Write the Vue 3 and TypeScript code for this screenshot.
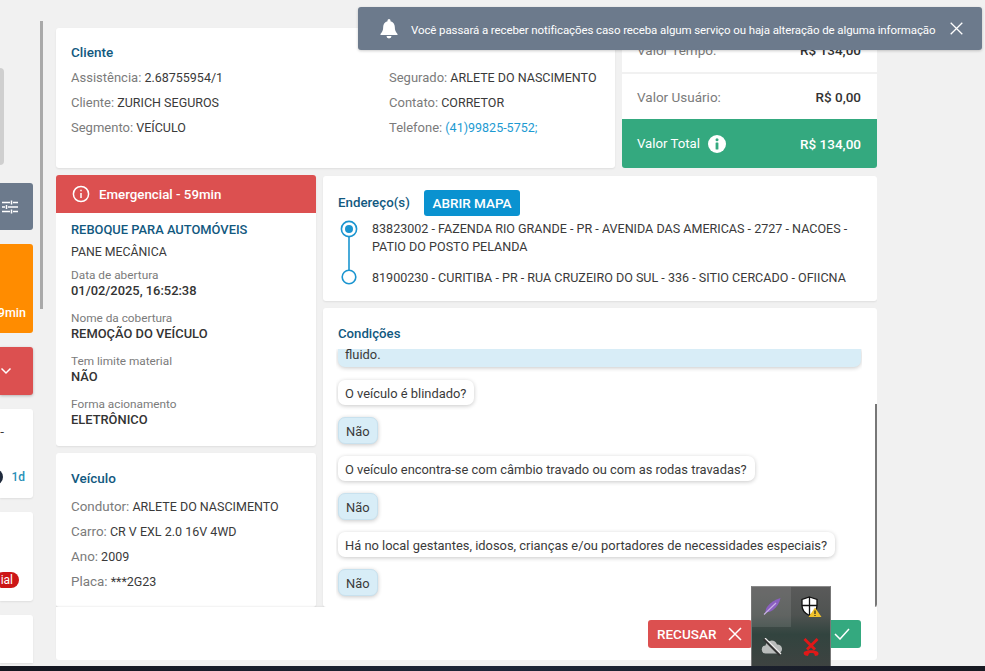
<script setup lang="ts">
interface Row { label: string; value: string; link?: boolean }
const clienteLeft: Row[] = [
  { label: 'Assistência:', value: '2.68755954/1' },
  { label: 'Cliente:', value: 'ZURICH SEGUROS' },
  { label: 'Segmento:', value: 'VEÍCULO' },
]
const clienteRight: Row[] = [
  { label: 'Segurado:', value: 'ARLETE DO NASCIMENTO' },
  { label: 'Contato:', value: 'CORRETOR' },
  { label: 'Telefone:', value: '(41)99825-5752;', link: true },
]
const veiculo: Row[] = [
  { label: 'Condutor:', value: 'ARLETE DO NASCIMENTO' },
  { label: 'Carro:', value: 'CR V EXL 2.0 16V 4WD' },
  { label: 'Ano:', value: '2009' },
  { label: 'Placa:', value: '***2G23' },
]
const facts = [
  { label: 'Data de abertura', value: '01/02/2025, 16:52:38' },
  { label: 'Nome da cobertura', value: 'REMOÇÃO DO VEÍCULO' },
  { label: 'Tem limite material', value: 'NÃO' },
  { label: 'Forma acionamento', value: 'ELETRÔNICO' },
]
const chat = [
  { q: 'O veículo é blindado?', a: 'Não' },
  { q: 'O veículo encontra-se com câmbio travado ou com as rodas travadas?', a: 'Não' },
  { q: 'Há no local gestantes, idosos, crianças e/ou portadores de necessidades especiais?', a: 'Não' },
]
</script>

<template>
  <div class="page">
    <div class="workspace">
      <aside class="side">
        <div class="side-grey"></div>
        <div class="side-btn slate">
          <svg width="16" height="16" viewBox="0 0 16 16" fill="none" stroke="#fff" stroke-width="1.5">
            <path d="M0 3.500h8M11 3.500h5M9.500 1.500v4M0 8h3M6 8h10M4.500 6v4M0 12.500h8M11 12.500h5M9.500 10.500v4" />
          </svg>
        </div>
        <div class="side-btn orange"><span class="side-time">59min</span></div>
        <div class="side-btn red">
          <svg width="12" height="8" viewBox="0 0 12 8" fill="none" stroke="#fff" stroke-width="1.5">
            <path d="M1.500 1.500 6 6l4.500-4.500" />
          </svg>
        </div>
        <div class="side-card one">
          <span class="side-dash">-</span>
          <div class="side-foot"><i class="side-dot"></i><b>1d</b></div>
        </div>
        <div class="side-card two"><span class="side-pill">ial</span></div>
        <div class="side-card three"></div>
      </aside>

      <div class="divider"></div>

      <main class="main">
        <div class="top">
          <section class="card cliente">
            <h3 class="title">Cliente</h3>
            <div class="cliente-cols">
              <div class="col-a">
                <p v-for="r in clienteLeft" :key="r.label" class="row"><span class="lab">{{ r.label }}</span> {{ r.value }}</p>
              </div>
              <div class="col-b">
                <p v-for="r in clienteRight" :key="r.label" class="row">
                  <span class="lab">{{ r.label }}</span> <span :class="{ link: r.link }">{{ r.value }}</span>
                </p>
              </div>
            </div>
          </section>
          <section class="values">
            <div class="val-row first"><span class="lab-v">Valor Tempo:</span><b>R$ 134,00</b></div>
            <div class="val-row"><span class="lab-v">Valor Usuário:</span><b>R$ 0,00</b></div>
            <div class="val-row total">
              <span class="total-lab">Valor Total
                <svg width="18" height="18" viewBox="0 0 18 18">
                  <circle cx="9" cy="9" r="9" fill="#fff" />
                  <circle cx="9" cy="4.800" r="1.500" fill="#34a97f" />
                  <rect x="7.600" y="7.500" width="2.800" height="7" rx=".6" fill="#34a97f" />
                </svg>
              </span>
              <b>R$ 134,00</b>
            </div>
          </section>
        </div>

        <div class="body">
          <div class="left">
            <section class="card emerg">
              <header class="emerg-head">
                <svg width="18" height="18" viewBox="0 0 18 18" fill="none" stroke="#fff" stroke-width="1.5">
                  <circle cx="9" cy="9" r="7.600" />
                  <path d="M9 8v5M9 4.700v1.600" />
                </svg>
                Emergencial - 59min
              </header>
              <div class="emerg-body">
                <h4 class="service">REBOQUE PARA AUTOMÓVEIS</h4>
                <p class="sub">PANE MECÂNICA</p>
                <div v-for="f in facts" :key="f.label" class="fact">
                  <span class="fact-lab">{{ f.label }}</span>
                  <strong class="fact-val">{{ f.value }}</strong>
                </div>
              </div>
            </section>
            <section class="card veiculo">
              <h3 class="title">Veículo</h3>
              <div class="veic-rows">
                <p v-for="r in veiculo" :key="r.label" class="row"><span class="lab">{{ r.label }}</span> {{ r.value }}</p>
              </div>
            </section>
          </div>

          <div class="right">
            <section class="card ender">
              <div class="ender-head">
                <h3 class="title end-title">Endereço(s)</h3>
                <button class="map">ABRIR MAPA</button>
              </div>
              <div class="stops">
                <div class="rail">
                  <svg width="18" height="66" viewBox="0 0 18 66" fill="none" stroke="#1b95d0" stroke-width="1.600">
                    <circle cx="9" cy="9" r="7.600" />
                    <circle cx="9" cy="9" r="4" fill="#1b95d0" stroke="none" />
                    <path d="M9 17v33" />
                    <circle cx="9" cy="57" r="6.800" />
                  </svg>
                </div>
                <div class="stop-text">
                  <p class="stop a">83823002 - FAZENDA RIO GRANDE - PR - AVENIDA DAS AMERICAS - 2727 - NACOES -<br />PATIO DO POSTO PELANDA</p>
                  <p class="stop">81900230 - CURITIBA - PR - RUA CRUZEIRO DO SUL - 336 - SITIO CERCADO - OFIICNA</p>
                </div>
              </div>
            </section>
            <section class="card cond">
              <h3 class="title cond-title">Condições</h3>
              <div class="chat">
                <div class="bubble full">fluido.</div>
                <template v-for="c in chat" :key="c.q">
                  <div class="bubble q">{{ c.q }}</div>
                  <div class="bubble ans">{{ c.a }}</div>
                </template>
              </div>
              <i class="scroll"></i>
            </section>
          </div>
        </div>

        <footer class="foot">
          <button class="act refuse">RECUSAR
            <svg width="14" height="14" viewBox="0 0 14 14" fill="none" stroke="#fff" stroke-width="1.500"><path d="m1 1 12 12M13 1 1 13" /></svg>
          </button>
          <button class="act accept">
            <svg width="16" height="12" viewBox="0 0 16 12" fill="none" stroke="#fff" stroke-width="1.500"><path d="m1 6 5 5L15 1" /></svg>
          </button>
        </footer>
      </main>
    </div>

    <div class="taskbar"></div>

    <div class="toast">
      <svg class="bell" width="18" height="20" viewBox="0 0 18 20" fill="#fff">
        <path d="M9 0a1.500 1.500 0 0 0-1.500 1.500v.7C4.900 2.900 3.200 5 3.200 7.800c0 3.700-1 5.400-2.700 7.200v1h17v-1c-1.700-1.800-2.700-3.500-2.700-7.200 0-2.800-1.700-4.900-4.300-5.600v-.7A1.500 1.500 0 0 0 9 0ZM6.500 17a2.500 2.500 0 0 0 5 0Z" />
      </svg>
      <span class="toast-text">Você passará a receber notificações caso receba algum serviço ou haja alteração de alguma informação</span>
      <svg width="13" height="13" viewBox="0 0 13 13" fill="none" stroke="#fff" stroke-width="1.300"><path d="m.7.700 11.600 11.600M12.300.7.700 12.300" /></svg>
    </div>

    <div class="tray">
      <div class="cell on">
        <svg width="22" height="22" viewBox="0 0 22 22">
          <path d="M19.500 2C14 3.500 9 6.500 6 11c-1 2-1.500 3-1.500 5 2 .5 4.500 0 7.500-2 4-3 6.500-7 7.500-12Z" fill="#8a5fc0" />
          <path d="M3 18.500 15 7" stroke="#c9b2e6" stroke-width="1.100" fill="none" />
        </svg>
      </div>
      <div class="cell">
        <svg width="22" height="22" viewBox="0 0 22 22">
          <path d="M9.500 1 17 3.500v6c0 5-3 8-7.500 10C5 17.500 2 14.500 2 9.500v-6Z" fill="#fff" stroke="#111" stroke-width="1.300" />
          <path d="M9.500 1v18.500M2 9.500h15" stroke="#111" stroke-width="1.300" />
          <path d="M15 11.500 21.500 21h-13Z" fill="#f2c22c" />
          <path d="M15 14.500v3.500M15 19v1" stroke="#222" stroke-width="1.200" />
        </svg>
      </div>
      <div class="cell">
        <svg width="22" height="18" viewBox="0 0 22 18">
          <path d="M5 15.500a4 4 0 0 1-.5-8 6 6 0 0 1 11.500-1 4.500 4.500 0 0 1 1 9Z" fill="#b9bcbb" />
          <path d="M3 1 19 17" stroke="#333" stroke-width="2.500" />
          <path d="M4 0 20 16" stroke="#eee" stroke-width="1.200" />
        </svg>
      </div>
      <div class="cell">
        <svg width="18" height="20" viewBox="0 0 18 20" fill="#e01818">
          <path d="M2 15c3-2.500 11-2.500 14 0 1 1 .5 3-.5 3.500l-2.500.5-1-2.500c-1.500-.6-3.500-.6-5 0L6 19l-2.500-.5C2 18 1 16 2 15Z" />
          <path d="m3.500 1 5.500 5.500L14.500 1l2 2L11 8.500l3 3-2 2-3-3-3 3-2-2 3-3L1.500 3Z" />
        </svg>
      </div>
    </div>
  </div>
</template>

<style>
html, body { margin: 0; padding: 0; }
</style>

<style scoped>
.page {
  position: relative;
  width: 985px;
  height: 671px;
  overflow: hidden;
  display: flex;
  flex-direction: column;
  background: #f1f1f1;
  font-family: "Roboto", "Noto Sans", sans-serif;
  font-size: 13.500px;
  color: #3a3a3a;
}
p, h3, h4 { margin: 0; font-weight: 400; }
b, strong { font-weight: 500; }
button { font-family: inherit; border: 0; cursor: pointer; }
.workspace { flex: 1; min-height: 0; display: flex; }

.side {
  width: 33px;
  flex: none;
  padding-top: 68px;
  box-sizing: border-box;
  display: flex;
  flex-direction: column;
  gap: 14px;
}
.side-grey { width: 4px; height: 97px; background: #cfcfcf; border-radius: 0 6px 6px 0; margin-bottom: 4px; }
.side-btn, .side-card {
  width: 33px;
  overflow: hidden;
  display: flex;
  justify-content: flex-end;
  border-radius: 0 3px 3px 0;
  flex: none;
  box-sizing: border-box;
}
.slate { height: 47px; background: #6c7a8c; align-items: center; padding-right: 15px; }
.orange { height: 89px; background: #ff8c00; align-items: flex-end; padding: 0 7px 13px 0; }
.side-time { flex: none; white-space: nowrap; color: #fff; font-weight: 500; font-size: 12.500px; }
.red { height: 48px; background: #dc5050; align-items: center; padding-right: 21px; box-shadow: 0 1px 3px rgba(0,0,0,.25); }
.side-card { background: #fff; box-shadow: 0 1px 2px rgba(0,0,0,.08); }
.one { height: 89px; flex-direction: column; justify-content: space-between; align-items: flex-end; padding: 14px 8px 13px 0; }
.side-dash { flex: none; margin-right: 21px; white-space: nowrap; }
.side-foot { display: flex; align-items: center; gap: 8px; font-size: 12px; color: #2a90b8; }
.side-dot { width: 16px; height: 16px; border-radius: 50%; background: #1f2a3c; flex: none; }
.two { height: 89px; align-items: flex-end; padding: 0 14px 13px 0; }
.side-pill { flex: none; background: #cc1616; color: #fff; font-size: 12px; line-height: 16px; padding: 0 6px; border-radius: 8px; }
.three { height: 48px; border-radius: 0 3px 0 0; }

.divider { width: 3px; height: 288px; margin: 21px 13px 0 7px; background: #a9a9a9; flex: none; }

.main { width: 821px; flex: none; padding-top: 28px; box-sizing: border-box; display: flex; flex-direction: column; height: 660px; }
.card { background: #fff; border-radius: 3px; box-shadow: 0 1px 2px rgba(0,0,0,.08); }
.title { color: #12597f; font-size: 13.500px; font-weight: 500; line-height: 20px; }
.row { line-height: 25px; white-space: nowrap; font-size: 12.500px; }
.lab { color: #7b7b7b; font-size: 13px; }
.lab-v { color: #7b7b7b; }
.link { color: #1d9ad2; }

.top { display: flex; gap: 7px; height: 140px; flex: none; }
.cliente { width: 559px; padding: 14px 15px 0; box-sizing: border-box; }
.cliente-cols { display: flex; margin-top: 3px; }
.col-a { width: 318px; flex: none; }
.values { flex: 1; display: flex; flex-direction: column; border-radius: 3px; overflow: hidden; gap: 2px; }
.val-row { display: flex; align-items: center; justify-content: space-between; padding: 0 16px 0 15px; background: #fff; height: 45px; }
.val-row.first { height: 44px; }
.val-row b { color: #333; }
.total { height: 49px; margin-top: -2px; background: #34a97f; color: #fff; }
.total b { color: #fff; }
.total-lab { display: flex; align-items: center; gap: 8px; font-size: 13.200px; }

.body { flex: 1; min-height: 0; display: flex; gap: 7px; margin-top: 7px; overflow: hidden; }
.left { width: 260px; flex: none; display: flex; flex-direction: column; gap: 7px; }
.emerg { height: 271px; overflow: hidden; flex: none; }
.emerg-head { height: 38px; background: #dc5050; color: #fff; font-weight: 500; font-size: 13.300px; display: flex; align-items: center; gap: 9px; padding-left: 16px; }
.emerg-body { padding: 8px 15px 0; }
.service { color: #12597f; font-weight: 500; line-height: 18px; font-size: 12.900px; }
.sub { line-height: 20px; margin-top: 3px; font-size: 12.300px; }
.fact { display: flex; flex-direction: column; margin-top: 4px; padding-top: 1px; margin-bottom: 3px; }
.fact + .fact { margin-top: 10px; }
.fact-lab { color: #7b7b7b; font-size: 11.800px; line-height: 16px; }
.fact-val { color: #333; line-height: 16px; font-size: 12.900px; }
.veiculo { flex: 1; padding: 15px 15px 0; }
.veiculo .lab { font-size: 13.400px; }
.veic-rows { margin-top: 6px; }
.right { flex: 1; display: flex; flex-direction: column; gap: 7px; min-width: 0; padding-top: 1px; }
.ender { height: 125px; flex: none; padding: 14px 15px 0; box-sizing: border-box; }
.ender-head { display: flex; align-items: center; gap: 14px; }
.end-title { width: 72px; flex: none; white-space: nowrap; font-size: 13.300px; }
.map { width: 96px; height: 26px; background: #0a92d0; color: #fff; font-weight: 500; font-size: 13.500px; border-radius: 3px; padding: 0; }
.stops { display: flex; gap: 15px; margin-top: 4px; }
.rail { width: 19px; flex: none; padding-left: 2px; box-sizing: border-box; }
.stop { line-height: 18px; white-space: nowrap; font-size: 12.550px; }
.stop.a { margin-bottom: 13px; }
.cond { flex: 1; position: relative; padding: 16px 15px 0; overflow: hidden; }
.cond-title { height: 25px; font-size: 13.200px; }
.chat { display: flex; flex-direction: column; align-items: flex-start; overflow: hidden; height: 258px; padding-left: 2px; margin-left: -2px; font-size: 12.900px; }
.bubble { box-sizing: border-box; padding: 0 7px; border-radius: 7px; line-height: 26px; white-space: nowrap; box-shadow: 0 1px 4px rgba(0,0,0,.22); flex: none; }
.full { width: 523px; height: 18px; line-height: 12px; background: #d8edf7; border-radius: 0 0 7px 7px; margin-bottom: 13px; }
.q { background: #fff; height: 25px; line-height: 28px; padding: 0 8px 0 7px; margin-bottom: 12px; }
.ans { background: #d8edf7; height: 27px; line-height: 27px; margin-bottom: 12.200px; border: 1px solid #c8e1ee; }
.scroll { position: absolute; right: 0; bottom: 0; width: 2px; height: 203px; background: #777; }

.foot { height: 53px; flex: none; background: #fff; display: flex; align-items: center; justify-content: flex-end; gap: 8px; padding: 0 16px 0 0; border-radius: 0 0 3px 3px; box-shadow: 0 -1px 2px rgba(0,0,0,.06); }
.act { height: 28px; border-radius: 3px; display: flex; align-items: center; color: #fff; font-weight: 500; font-size: 13.500px; }
.refuse { width: 104px; background: #dc5050; padding: 0 10px 0 9px; justify-content: space-between; }
.accept { width: 101px; background: #34a97f; padding: 0 11px 0 0; justify-content: flex-end; }

.taskbar { height: 5px; flex: none; margin-top: 1px; background: linear-gradient(90deg, #14161f, #1d2638 50%, #181a22); }

.toast {
  position: absolute;
  left: 358px;
  top: 7px;
  width: 624px;
  height: 43px;
  box-sizing: border-box;
  padding: 0 19px 0 22px;
  display: flex;
  align-items: center;
  background: #6c7a8c;
  border-radius: 3px;
  color: #fff;
  box-shadow: 0 1px 3px rgba(0,0,0,.2);
}
.bell { flex: none; margin-right: 13px; }
.toast-text { flex: 1; white-space: nowrap; font-size: 11.500px; letter-spacing: -.1px; margin-top: 2px; }

.tray {
  position: absolute;
  left: 751px;
  top: 586px;
  width: 80px;
  height: 80px;
  box-sizing: border-box;
  display: grid;
  grid-template-columns: 39px 39px;
  grid-template-rows: 40px 39px;
  background: linear-gradient(180deg, #5a5a5a 0%, #4f5351 35%, #32443f 60%, #3e4341 100%);
  border-top: 1px solid #8a8a8a;
  border-left: 1px solid #777;
  border-right: 1px solid #777;
}
.cell { display: flex; align-items: center; justify-content: center; }
.on { background: rgba(255,255,255,.1); }
</style>
